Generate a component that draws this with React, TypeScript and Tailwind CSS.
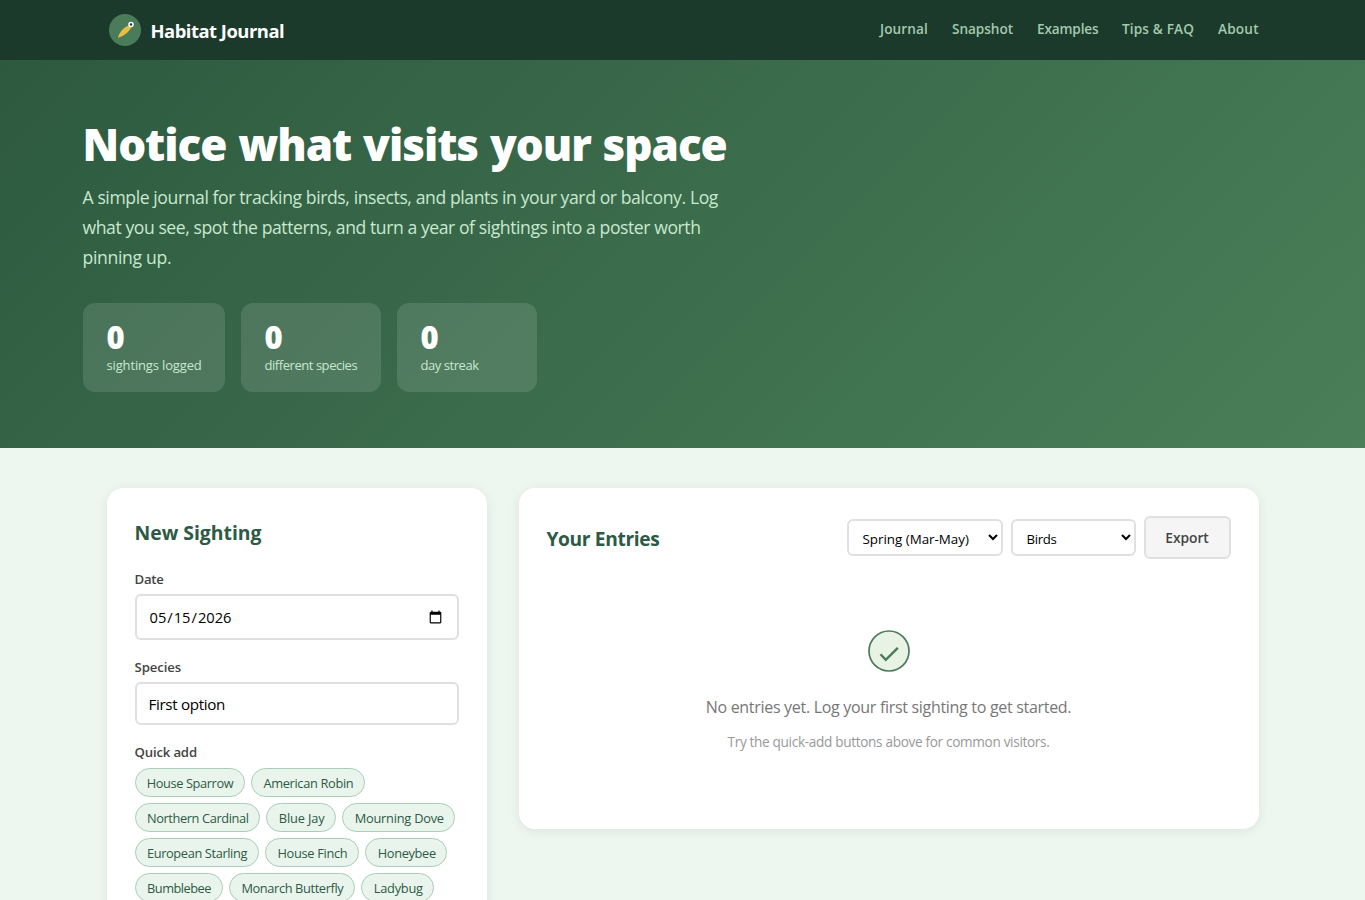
import React, { useState } from "react";

const navLinks = [
  { label: "Journal", cls: "w-[48px] tracking-[0.1px]" },
  { label: "Snapshot", cls: "w-[61px] tracking-[-0.05px]" },
  { label: "Examples", cls: "w-[61px] tracking-[-0.14px]" },
  { label: "Tips & FAQ", cls: "w-[72px] tracking-[0.14px]" },
  { label: "About", cls: "w-[40.5px] tracking-[0.2px]" },
];

const stats = [
  { label: "sightings logged", card: "w-[142px]", text: "tracking-[-0.15px]" },
  { label: "different species", card: "w-[140px]", text: "tracking-[-0.45px]" },
  { label: "day streak", card: "w-[140px]", text: "tracking-[-0.45px]" },
];

const species = [
  { name: "House Sparrow", cls: "w-[110px] tracking-[-0.39px]" },
  { name: "American Robin", cls: "w-[114px] tracking-[-0.32px]" },
  { name: "Northern Cardinal", cls: "w-[125.5px] tracking-[-0.39px]" },
  { name: "Blue Jay", cls: "w-[69.5px] tracking-[-0.16px]" },
  { name: "Mourning Dove", cls: "w-[113px] tracking-[-0.23px]" },
  { name: "European Starling", cls: "w-[124px] tracking-[-0.37px]" },
  { name: "House Finch", cls: "w-[94px] tracking-[-0.3px]" },
  { name: "Honeybee", cls: "w-[82px] tracking-[-0.35px]" },
  { name: "Bumblebee", cls: "w-[88px] tracking-[-0.49px]" },
  { name: "Monarch Butterfly", cls: "w-[126px] tracking-[-0.37px]" },
  { name: "Ladybug", cls: "w-[73px] tracking-[-0.24px]" },
];

function Logo() {
  return (
    <svg width="36" height="36" viewBox="0 0 36 36" fill="none">
      <circle cx="18" cy="18" r="16" fill="#4a7c59" />
      <path d="M11 25.8C12 20.5 17 14.5 22.6 13.2L24.4 15C22.5 19.5 17 24 11 25.8Z" fill="#e9bf42" />
      <circle cx="24" cy="12.5" r="2" fill="#1b3a2b" stroke="#fff" strokeWidth="1.5" />
    </svg>
  );
}

function Header() {
  return (
    <header className="h-[60px] bg-[#1b3a2b]">
      <div className="mx-auto flex h-full w-[1200px] items-center justify-between px-6">
        <div className="flex items-center gap-2">
          <Logo />
          <span className="pt-px whitespace-nowrap text-[18.4px] leading-7 font-bold tracking-[-0.49px] text-white">Habitat Journal</span>
        </div>
        <nav className="flex gap-6 pb-[2px] text-[13.6px] leading-6 font-semibold text-[#a3c9ae]">
          {navLinks.map((l) => (
            <a key={l.label} href="#" className={`whitespace-nowrap ${l.cls}`}>{l.label}</a>
          ))}
        </nav>
      </div>
    </header>
  );
}

function Hero() {
  return (
    <section className="h-[388px] bg-[linear-gradient(135deg,#2d5a3f_0%,#4a7f59_100%)] pt-14">
      <div className="mx-auto w-[1200px]">
        <h1 className="whitespace-nowrap font-['Noto_Sans',sans-serif] text-[44px] leading-[56px] font-black tracking-[-1.05px] [word-spacing:1.5px] text-white">
          Notice what visits your space
        </h1>
        <p className="mt-[10px] whitespace-nowrap text-[17.6px] leading-[30px] text-[#c8e8cf]">
          <span className="block tracking-[-0.408px]">A simple journal for tracking birds, insects, and plants in your yard or balcony. Log</span>
          <span className="block tracking-[-0.433px]">what you see, spot the patterns, and turn a year of sightings into a poster worth</span>
          <span className="block tracking-[-0.33px]">pinning up.</span>
        </p>
        <div className="mt-[31px] flex gap-4">
          {stats.map((s) => (
            <div key={s.label} className={`h-[89px] rounded-xl bg-white/12 px-6 pt-[18px] ${s.card}`}>
              <div className="font-['Noto_Sans',sans-serif] text-[31px] leading-8 font-black text-white">0</div>
              <div className={`whitespace-nowrap text-[13px] leading-[25px] text-[#c8e8cf] ${s.text}`}>{s.label}</div>
            </div>
          ))}
        </div>
      </div>
    </section>
  );
}

const cardClass = "rounded-2xl bg-white px-7 shadow-[0_2px_12px_rgba(0,0,0,0.08)]";
const labelClass = "block text-[13.2px] leading-6 font-semibold text-[#444]";
const fieldClass = "block w-full rounded-md border-2 border-[#e0e0e0] bg-white px-3 text-black outline-none";

function SightingForm() {
  const [date, setDate] = useState("2026-05-15");
  const [name, setName] = useState("First option");
  return (
    <section className={`h-[700px] w-[380px] shrink-0 pt-[29px] ${cardClass}`}>
      <h2 className="text-[19.4px] leading-8 font-bold tracking-[-0.02px] text-[#2d5a45]">New Sighting</h2>
      <label className={`mt-[18px] tracking-[-0.25px] ${labelClass}`}>Date</label>
      <input type="date" value={date} onChange={(e) => setDate(e.target.value)} className={`mt-[3px] h-[46px] text-[14.7px] tracking-normal ${fieldClass}`} />
      <label className={`mt-[15px] tracking-[-0.12px] ${labelClass}`}>Species</label>
      <input value={name} onChange={(e) => setName(e.target.value)} className={`mt-[3px] h-[43px] text-[15.2px] tracking-[-0.34px] ${fieldClass}`} />
      <label className={`mt-[15px] tracking-[-0.18px] ${labelClass}`}>Quick add</label>
      <div className="mt-1 flex flex-wrap gap-x-[6.4px] gap-y-[6px]">
        {species.map((s) => (
          <button
            key={s.name}
            onClick={() => setName(s.name)}
            className={`flex h-[29px] items-center justify-center rounded-full border border-[#a9cdb8] bg-[#e9f5ec] pt-[2px] pl-px text-[12.8px] whitespace-nowrap text-[#2d5a45] ${s.cls}`}
          >
            {s.name}
          </button>
        ))}
      </div>
    </section>
  );
}

function Entries() {
  const select = "h-[37px] rounded-md border-2 border-[#e0e0e0] bg-white text-black outline-none";
  return (
    <section className={`h-[341px] flex-1 pt-7 ${cardClass}`}>
      <div className="flex h-[43px] items-center gap-2">
        <h2 className="mr-auto pt-[2px] text-[19.2px] leading-8 font-bold tracking-[-0.37px] text-[#2d5a45]">Your Entries</h2>
        <select className={`w-[156px] pt-[2px] pr-2 pl-[10px] text-[13.4px] tracking-[-0.02px] ${select}`}>
          <option>Spring (Mar-May)</option>
        </select>
        <select className={`w-[125px] pt-[2px] pr-2 pl-[10px] text-[13.2px] tracking-[-0.3px] ${select}`}>
          <option>Birds</option>
        </select>
        <button className="h-[43px] w-[87px] rounded-md border-2 border-[#e0e0e0] bg-[#f5f5f5] pt-[2px] text-[13.8px] font-semibold tracking-[-0.03px] text-[#444]">Export</button>
      </div>
      <div className="flex flex-col items-center pt-[71px] whitespace-nowrap">
        <svg width="42" height="42" viewBox="0 0 42 42" fill="none" stroke="#4a7c59" strokeWidth="2">
          <circle cx="21" cy="21" r="20" fill="#e8f2e5" strokeWidth="1.7" />
          <path d="M12.5 24.2L17.8 29.8L29.8 17.8" strokeWidth="2.4" />
        </svg>
        <p className="mt-[23px] text-[16px] leading-6 tracking-[-0.303px] text-[#777]">No entries yet. Log your first sighting to get started.</p>
        <p className="mt-[11px] text-[13.6px] leading-6 tracking-[-0.326px] text-[#999]">Try the quick-add buttons above for common visitors.</p>
      </div>
    </section>
  );
}

export default function App() {
  return (
    <div className="h-[900px] overflow-hidden bg-[#edf6ef] font-['Open_Sans','Noto_Sans',sans-serif]">
      <Header />
      <Hero />
      <main className="mx-auto flex w-[1200px] items-start gap-8 px-6 pt-10">
        <SightingForm />
        <Entries />
      </main>
    </div>
  );
}
